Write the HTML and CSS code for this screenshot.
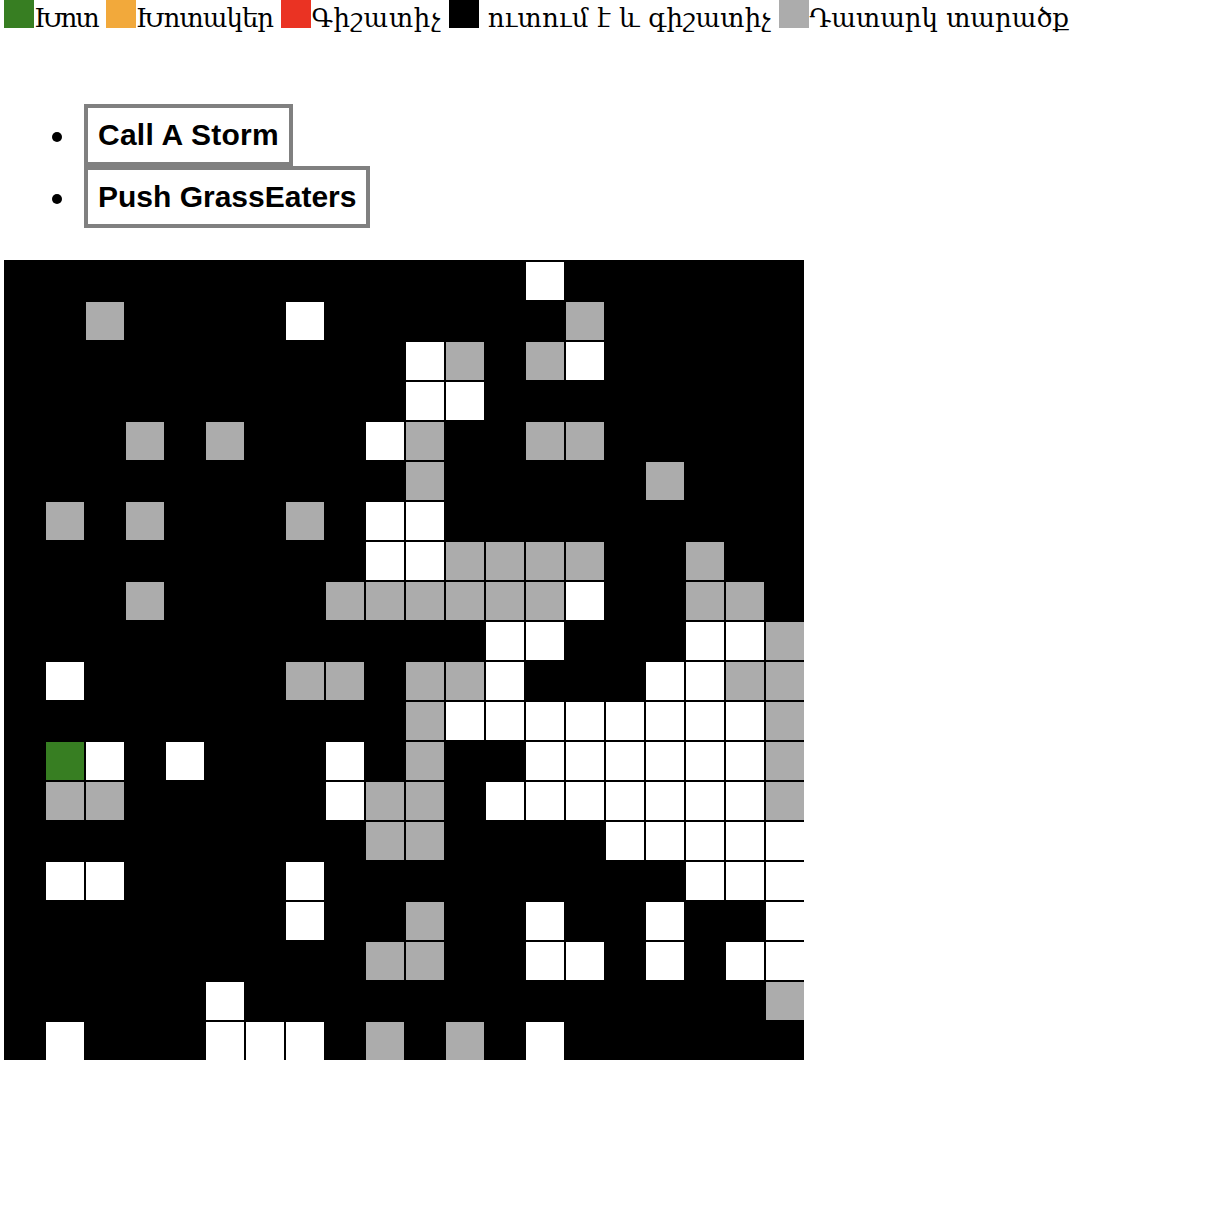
FILE: index.html
```html
<!DOCTYPE html>
<html lang="hy">
<head>
<meta charset="utf-8">
<title>Game</title>
<link rel="stylesheet" href="styles.css">
</head>
<body>
<div class="legend"><span class="sw sw-green"></span><span class="lbl lbl-grass">Խոտ</span> <span class="sw sw-orange"></span><span class="lbl lbl-herb">Խոտակեր</span> <span class="sw sw-red"></span><span class="lbl lbl-pred">Գիշատիչ</span> <span class="sw sw-black"></span> <span class="lbl lbl-omni">ուտում է և գիշատիչ</span> <span class="sw sw-gray"></span><span class="lbl">Դատարկ տարածք</span></div>
<ul class="actions">
<li><button class="btn btn-storm">Call A Storm</button></li>
<li><button class="btn">Push GrassEaters</button></li>
</ul>
<div class="board">
<i></i><i></i><i></i><i></i><i></i><i></i><i></i><i></i><i></i><i></i><i></i><i></i><i></i><i class="w"></i><i></i><i></i><i></i><i></i><i></i><i></i>
<i></i><i></i><i class="g"></i><i></i><i></i><i></i><i></i><i class="w"></i><i></i><i></i><i></i><i></i><i></i><i></i><i class="g"></i><i></i><i></i><i></i><i></i><i></i>
<i></i><i></i><i></i><i></i><i></i><i></i><i></i><i></i><i></i><i></i><i class="w"></i><i class="g"></i><i></i><i class="g"></i><i class="w"></i><i></i><i></i><i></i><i></i><i></i>
<i></i><i></i><i></i><i></i><i></i><i></i><i></i><i></i><i></i><i></i><i class="w"></i><i class="w"></i><i></i><i></i><i></i><i></i><i></i><i></i><i></i><i></i>
<i></i><i></i><i></i><i class="g"></i><i></i><i class="g"></i><i></i><i></i><i></i><i class="w"></i><i class="g"></i><i></i><i></i><i class="g"></i><i class="g"></i><i></i><i></i><i></i><i></i><i></i>
<i></i><i></i><i></i><i></i><i></i><i></i><i></i><i></i><i></i><i></i><i class="g"></i><i></i><i></i><i></i><i></i><i></i><i class="g"></i><i></i><i></i><i></i>
<i></i><i class="g"></i><i></i><i class="g"></i><i></i><i></i><i></i><i class="g"></i><i></i><i class="w"></i><i class="w"></i><i></i><i></i><i></i><i></i><i></i><i></i><i></i><i></i><i></i>
<i></i><i></i><i></i><i></i><i></i><i></i><i></i><i></i><i></i><i class="w"></i><i class="w"></i><i class="g"></i><i class="g"></i><i class="g"></i><i class="g"></i><i></i><i></i><i class="g"></i><i></i><i></i>
<i></i><i></i><i></i><i class="g"></i><i></i><i></i><i></i><i></i><i class="g"></i><i class="g"></i><i class="g"></i><i class="g"></i><i class="g"></i><i class="g"></i><i class="w"></i><i></i><i></i><i class="g"></i><i class="g"></i><i></i>
<i></i><i></i><i></i><i></i><i></i><i></i><i></i><i></i><i></i><i></i><i></i><i></i><i class="w"></i><i class="w"></i><i></i><i></i><i></i><i class="w"></i><i class="w"></i><i class="g"></i>
<i></i><i class="w"></i><i></i><i></i><i></i><i></i><i></i><i class="g"></i><i class="g"></i><i></i><i class="g"></i><i class="g"></i><i class="w"></i><i></i><i></i><i></i><i class="w"></i><i class="w"></i><i class="g"></i><i class="g"></i>
<i></i><i></i><i></i><i></i><i></i><i></i><i></i><i></i><i></i><i></i><i class="g"></i><i class="w"></i><i class="w"></i><i class="w"></i><i class="w"></i><i class="w"></i><i class="w"></i><i class="w"></i><i class="w"></i><i class="g"></i>
<i></i><i class="t"></i><i class="w"></i><i></i><i class="w"></i><i></i><i></i><i></i><i class="w"></i><i></i><i class="g"></i><i></i><i></i><i class="w"></i><i class="w"></i><i class="w"></i><i class="w"></i><i class="w"></i><i class="w"></i><i class="g"></i>
<i></i><i class="g"></i><i class="g"></i><i></i><i></i><i></i><i></i><i></i><i class="w"></i><i class="g"></i><i class="g"></i><i></i><i class="w"></i><i class="w"></i><i class="w"></i><i class="w"></i><i class="w"></i><i class="w"></i><i class="w"></i><i class="g"></i>
<i></i><i></i><i></i><i></i><i></i><i></i><i></i><i></i><i></i><i class="g"></i><i class="g"></i><i></i><i></i><i></i><i></i><i class="w"></i><i class="w"></i><i class="w"></i><i class="w"></i><i class="w"></i>
<i></i><i class="w"></i><i class="w"></i><i></i><i></i><i></i><i></i><i class="w"></i><i></i><i></i><i></i><i></i><i></i><i></i><i></i><i></i><i></i><i class="w"></i><i class="w"></i><i class="w"></i>
<i></i><i></i><i></i><i></i><i></i><i></i><i></i><i class="w"></i><i></i><i></i><i class="g"></i><i></i><i></i><i class="w"></i><i></i><i></i><i class="w"></i><i></i><i></i><i class="w"></i>
<i></i><i></i><i></i><i></i><i></i><i></i><i></i><i></i><i></i><i class="g"></i><i class="g"></i><i></i><i></i><i class="w"></i><i class="w"></i><i></i><i class="w"></i><i></i><i class="w"></i><i class="w"></i>
<i></i><i></i><i></i><i></i><i></i><i class="w"></i><i></i><i></i><i></i><i></i><i></i><i></i><i></i><i></i><i></i><i></i><i></i><i></i><i></i><i class="g"></i>
<i></i><i class="w"></i><i></i><i></i><i></i><i class="w"></i><i class="w"></i><i class="w"></i><i></i><i class="g"></i><i></i><i class="g"></i><i></i><i class="w"></i><i></i><i></i><i></i><i></i><i></i><i></i>
</div>
</body>
</html>
```
FILE: styles.css
```css
html, body {
  margin: 0;
  padding: 0;
  background: #fff;
  color: #000;
}

body {
  font-family: "DejaVu Serif", "DejaVu Sans", serif;
}

.legend {
  padding-left: 4px;
  font-size: 26px;
  line-height: 36px;
  height: 35px;
  white-space: nowrap;
}

.lbl-grass { letter-spacing: -2px; }
.lbl-herb { letter-spacing: -0.9px; }
.lbl-pred { letter-spacing: 0.7px; }
.lbl-omni { letter-spacing: 0.2px; }

.sw {
  display: inline-block;
  width: 30px;
  height: 28px;
  vertical-align: top;
}

.sw-green { background: #377e22; }
.sw-orange { background: #f2a93b; }
.sw-red { background: #ea3323; }
.sw-black { background: #000; }
.sw-gray { background: #acacac; }

.actions {
  margin: 69px 0 32px 0;
  padding: 0 0 0 84px;
  list-style: none;
  font-size: 30px;
  font-family: "Liberation Sans", Arial, sans-serif;
}

.actions li {
  line-height: 62px;
  height: 62px;
}

.actions li::before {
  content: "";
  display: inline-block;
  vertical-align: top;
  width: 10px;
  height: 10px;
  margin: 28px 22px 0 -32px;
  border-radius: 50%;
  background: #000;
}

.btn {
  display: inline-block;
  vertical-align: top;
  margin: 0;
  padding: 10px;
  border: 4px solid #808080;
  background: #fff;
  color: #000;
  font: bold 30px/34px "Liberation Sans", Arial, sans-serif;
}

.btn-storm {
  letter-spacing: 0.25px;
}

.board {
  margin-left: 4px;
  width: 800px;
  height: 800px;
  display: grid;
  grid-template-columns: repeat(20, 40px);
  grid-template-rows: repeat(20, 40px);
  background: #000;
}

.board i {
  display: block;
  box-sizing: border-box;
  border-top: 2px solid #000;
  border-left: 2px solid #000;
  background: #000;
}

.board i.w { background: #fff; }
.board i.g { background: #acacac; }
.board i.t { background: #377e22; }
```
